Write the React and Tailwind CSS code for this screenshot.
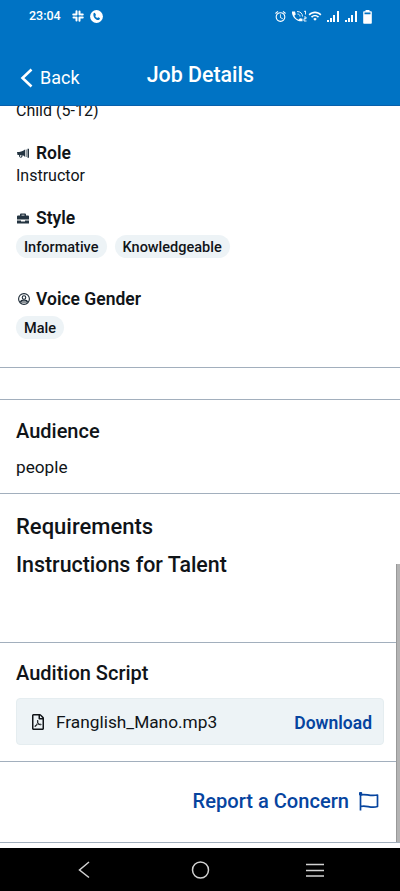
import { FaRegFilePdf } from 'react-icons/fa';
import { MdWifi, MdOutlineAlarm } from 'react-icons/md';

const Logo = () => (
  <svg className="w-3 h-3" viewBox="0 0 24 24" fill="none" stroke="currentColor" strokeWidth="4" strokeLinecap="round">
    <path d="M9 2.500v6.500M2.500 9h6.500M15 3v6M18 9h3.500M3 15h3M9 15v6M15 15h6.500M15 15v6.500" />
  </svg>
);

const CallBubble = () => (
  <svg className="w-[13px] h-[13px]" viewBox="0 0 26 26">
    <circle cx="13" cy="13" r="12.800" fill="white" />
    <path d="M7 7c1-2 3-2 4 1l1 2-1.500 2c1 2 2 3 4 4l2-1.500 3 1.500c1 1 0 3-2 4-6 1-12-6-10.500-13z" fill="#0073c4" />
  </svg>
);

const Calling = () => (
  <svg className="w-[15px] h-3" viewBox="0 0 30 24" fill="none" stroke="white" strokeWidth="1.800">
    <path d="M0 3h6l1.500 6-3 2.500c2 4 4.500 6.500 8.500 8l3-3 5 1v5C9 24-1 13 0 3z" fill="white" stroke="none" />
    <path d="M10 3c7 0 11 4 11 10M11 8c3 0 5 2 5 5M24 3l3-1v7M24 14h4v3.500h-4V22h5" />
  </svg>
);

const Signal = () => (
  <svg className="w-3 h-[11px]" viewBox="0 0 12 11" fill="white">
    <path d="M0 9h2v2H0zM3 7h2v4H3zM6 4h2v7H6zM10 0h2v11h-2z" />
  </svg>
);

const Battery = () => (
  <svg className="mt-px w-[9px] h-[14px]" viewBox="0 0 9 14" fill="white" fillRule="evenodd">
    <path d="M2.500 0h4v1.300H8q.8 0 .8.800V13q0 .8-.8.800H1Q.2 13.800.2 13V2.100q0-.8.800-.8h1.500zM1.500 2.600v1.600h6V2.600z" />
  </svg>
);

const Megaphone = () => (
  <svg className="ml-px w-3 h-[11px]" viewBox="0 0 24 22" fill="#243441">
    <path d="M0 8c6 0 11-1 16-5v15c-2-2-3-3-5-3.500 1 7-8 6-7-.5H1zM6 14.500c-1 4 3 4 3 0zM17.500 3H19v15h-1.500zM21 1.500h3v18h-3z" fillRule="evenodd" />
  </svg>
);

const Briefcase = () => (
  <svg className="ml-px w-3 h-[11px]" viewBox="0 0 24 22" fill="#243441">
    <path d="M6 5V3q0-2 2-2h8q2 0 2 2v2h4q2 0 2 2v6H0V7q0-2 2-2zM9 5h6V3.500H9zM0 15h8v2h8v-2h8v6H0z" fillRule="evenodd" />
  </svg>
);

const Person = () => (
  <svg className="ml-[2px] w-3 h-3" viewBox="0 0 24 24" fill="none" stroke="#1b2935" strokeWidth="2.200">
    <circle cx="12" cy="12" r="10.800" />
    <circle cx="12" cy="9" r="3.500" />
    <path d="M5 18c1-5 13-5 14 0z" />
  </svg>
);

const Flag = () => (
  <svg className="w-5 h-[19px]" viewBox="0 0 20 19" fill="none" stroke="#06449f" strokeWidth="1.700" strokeLinejoin="round">
    <path d="M1.500 1v17.500M1.500 3c5-1.800 9 1.800 17 0v11.500c-7 2.500-11-2-17 0" />
    <circle cx="1.500" cy="1.700" r="1" fill="#06449f" />
  </svg>
);

const Heading = ({ icon, children }) => (
  <h3 className="flex items-center h-6 text-[17.500px] font-semibold">
    <span className="w-5 shrink-0">{icon}</span>
    {children}
  </h3>
);

const Tag = ({ children }) => (
  <span className="h-[23px] px-2 rounded-full bg-[#edf3f6] text-[14.500px] leading-[25px] font-medium whitespace-nowrap">{children}</span>
);

const Header = () => (
  <header className="h-[106px] bg-[#0073c4] border-b border-[#0860ac] text-white">
    <div className="flex items-center h-8 pl-[29px] pr-[28px]">
      <span className="mt-px text-[12.500px] font-medium">23:04</span>
      <div className="flex items-center gap-[6px] ml-[11px]">
        <Logo />
        <CallBubble />
      </div>
      <div className="flex items-center ml-auto">
        <MdOutlineAlarm size={13} />
        <div className="flex items-center gap-px ml-[5px]">
          <Calling />
          <MdWifi size={14} />
        </div>
        <div className="flex gap-[6px] ml-[5px] mr-[6px]">
          <Signal />
          <Signal />
        </div>
        <Battery />
      </div>
    </div>
    <div className="grid grid-cols-3 items-center h-[84px] pl-5">
      <div className="flex items-center gap-[7px] pt-[7px] text-[18px]">
        <svg className="w-[13px] h-5" viewBox="0 0 13 20" fill="none" stroke="white" strokeWidth="2.600">
          <path d="M11.500 1.500L2.500 10l9 8.500" />
        </svg>
        Back
      </div>
      <h1 className="pt-[2px] text-[21.400px] font-medium whitespace-nowrap">Job Details</h1>
    </div>
  </header>
);

const App = () => {
  const styles = ['Informative', 'Knowledgeable'];
  return (
    <div className="flex flex-col h-[891px] w-[400px] overflow-hidden bg-white text-[#101418] font-['Roboto',sans-serif]">
      <Header />
      <main className="relative h-[742px]">
        <section className="h-[262px] px-4 border-b border-[#a2afbd] overflow-hidden">
          <p className="-mt-[7px] h-6 leading-6 text-[16px]">Child (5-12)</p>
          <div className="mt-[18px]">
            <Heading icon={<Megaphone />}>Role</Heading>
            <p className="h-[22px] leading-[22px] text-[16px]">Instructor</p>
          </div>
          <div className="mt-[19px]">
            <Heading icon={<Briefcase />}>Style</Heading>
            <div className="flex gap-[8px] mt-[5px]">
              {styles.map((style) => <Tag key={style}>{style}</Tag>)}
            </div>
          </div>
          <div className="mt-[29px]">
            <Heading icon={<Person />}>Voice Gender</Heading>
            <div className="flex mt-[5px]"><Tag>Male</Tag></div>
          </div>
        </section>
        <div className="h-8 border-b border-[#a2afbd]" />
        <section className="h-[94px] px-4 pt-[17px] border-b border-[#a2afbd]">
          <h2 className="h-7 leading-7 text-[20px] font-medium">Audience</h2>
          <p className="mt-[10px] h-6 leading-6 text-[17.200px]">people</p>
        </section>
        <section className="h-[149px] px-4 pt-[19px] border-b border-[#a2afbd]">
          <h2 className="h-7 leading-7 text-[22px] font-medium">Requirements</h2>
          <h2 className="mt-[10px] h-7 leading-7 text-[21.400px] font-medium">Instructions for Talent</h2>
        </section>
        <section className="h-[119px] px-4 pt-[16px] border-b border-[#a2afbd]">
          <h2 className="h-7 leading-7 text-[20px] font-medium">Audition Script</h2>
          <div className="flex items-center mt-[11px] h-[47px] pl-[13px] pr-[11px] rounded bg-[#edf3f6] border border-[#e5edf0]">
            <FaRegFilePdf size={16} />
            <span className="ml-[10px] pt-[3px] text-[17.300px]">Franglish_Mano.mp3</span>
            <a className="ml-auto pt-[3px] text-[17.500px] font-semibold text-[#06449f]">Download</a>
          </div>
        </section>
        <div className="flex items-center justify-end h-[81px] gap-[10px] pr-[21px] pb-[2px] border-b border-[#a2afbd] text-[20.100px] font-medium text-[#06449f]">
          Report a Concern
          <Flag />
        </div>
        {/* scrollbar thumb */}
        <div className="absolute right-0 top-[458px] w-1 h-[278px] bg-[#b4b4b4] border-l border-[#999]" />
      </main>
      <nav className="h-[43px] bg-black">
        <svg className="w-full h-full" viewBox="0 0 400 43" fill="none" stroke="#d2d2d2" strokeWidth="1.500">
          <path d="M89 14l-9.500 8 9.500 7.500M306 16.500h18M306 22.500h18M306 28h18" />
          <circle cx="200.500" cy="22" r="8" />
        </svg>
      </nav>
    </div>
  );
};

export default App;
